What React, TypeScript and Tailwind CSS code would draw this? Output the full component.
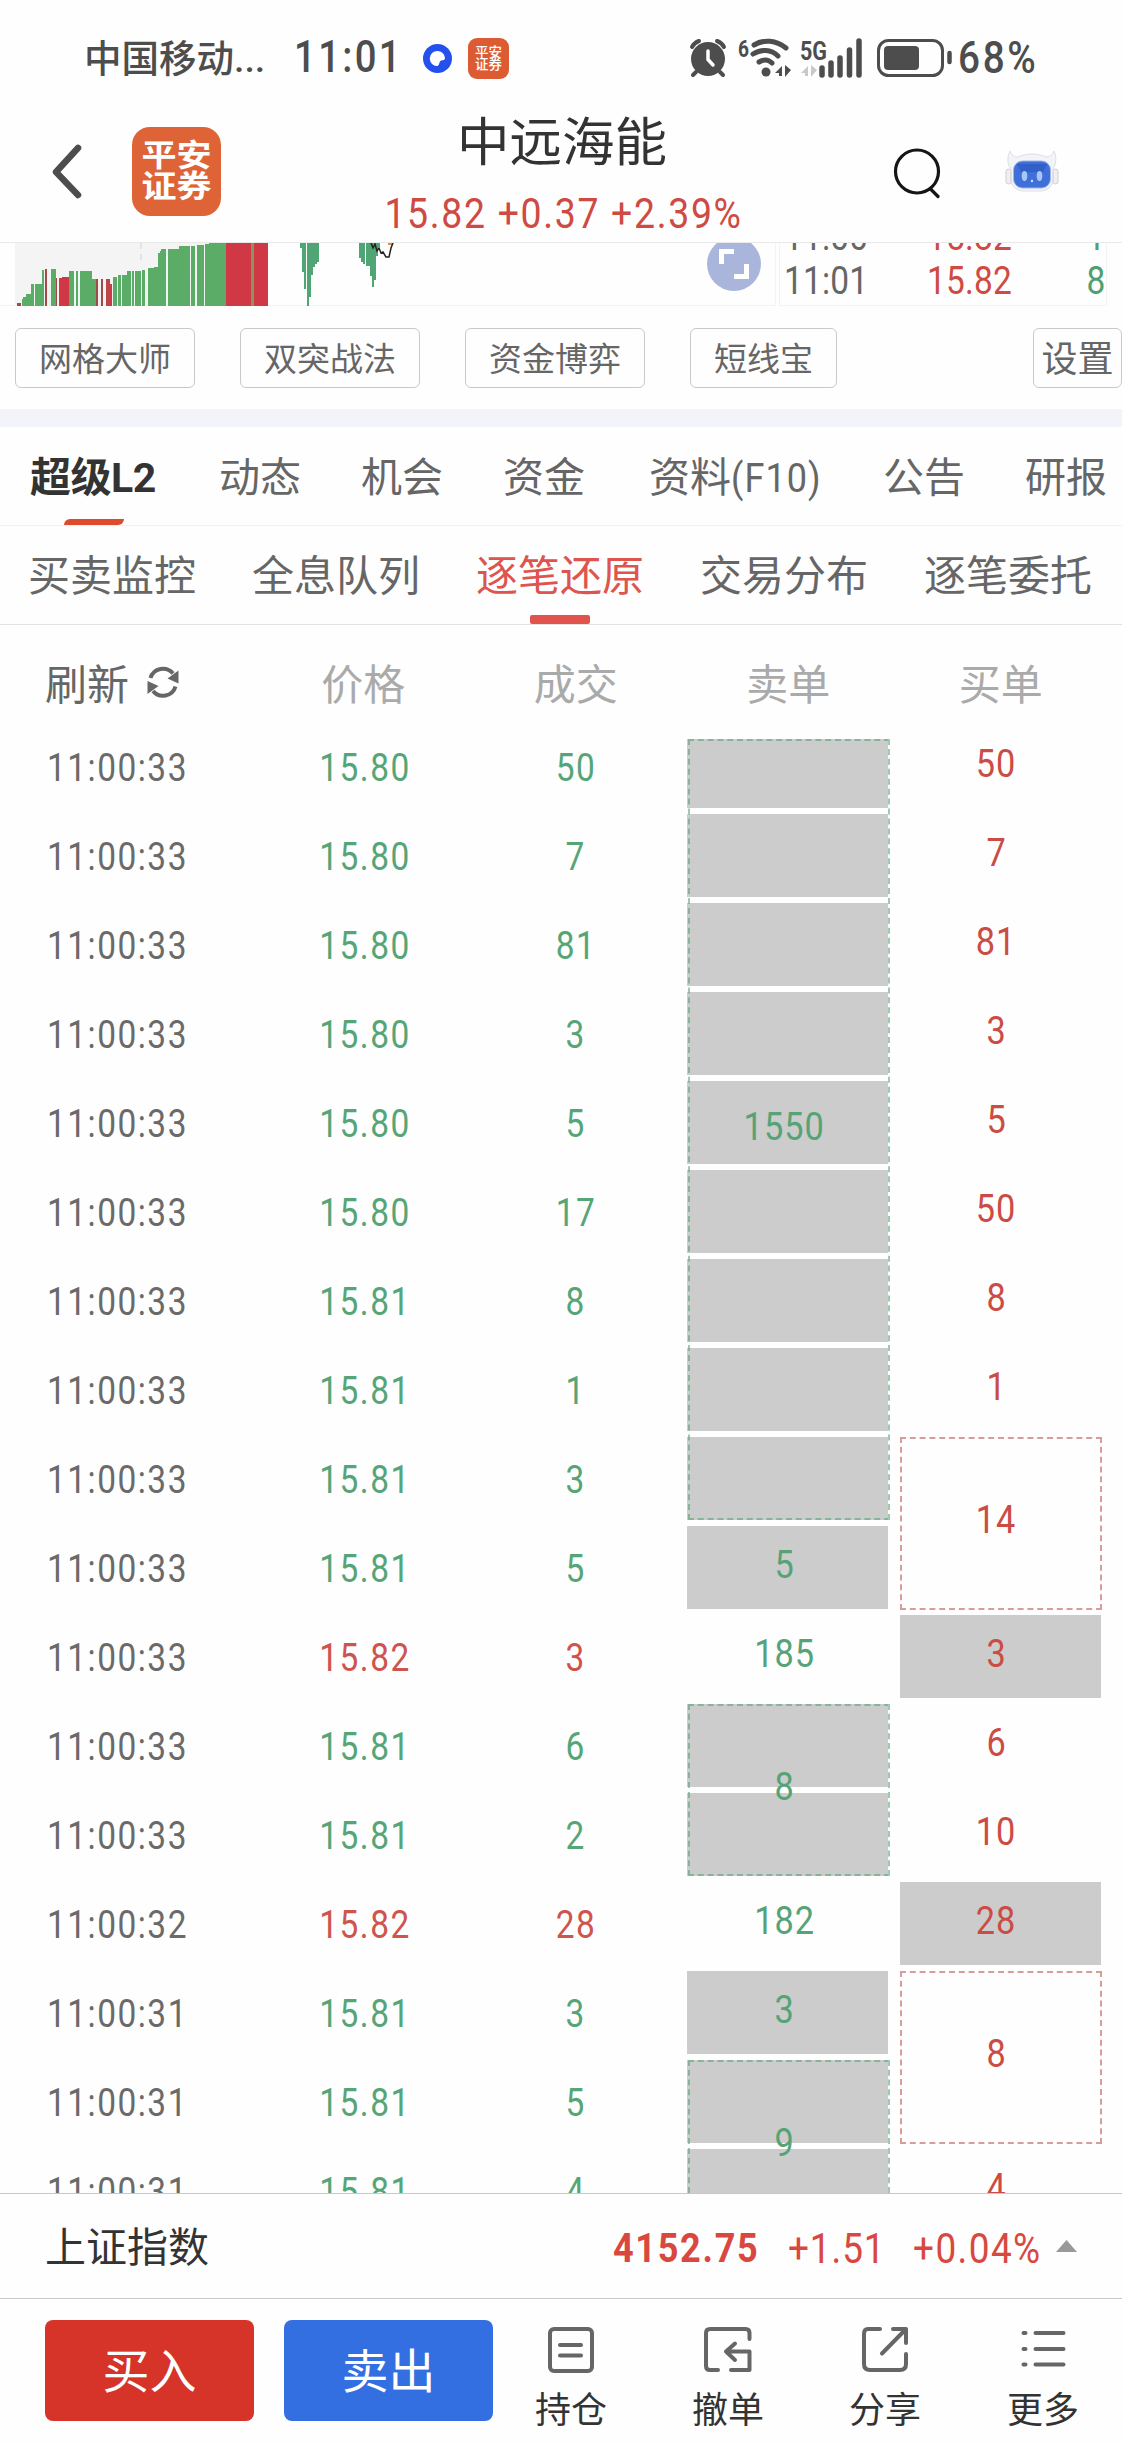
import type { ReactNode } from "react";
import clsx from "clsx";

type Order = { value: string; rows?: number; filled?: boolean; dashed?: boolean; cut?: boolean };

const trades = [
  { time: "11:00:33", price: "15.80", volume: "50" },
  { time: "11:00:33", price: "15.80", volume: "7" },
  { time: "11:00:33", price: "15.80", volume: "81" },
  { time: "11:00:33", price: "15.80", volume: "3" },
  { time: "11:00:33", price: "15.80", volume: "5" },
  { time: "11:00:33", price: "15.80", volume: "17" },
  { time: "11:00:33", price: "15.81", volume: "8" },
  { time: "11:00:33", price: "15.81", volume: "1" },
  { time: "11:00:33", price: "15.81", volume: "3" },
  { time: "11:00:33", price: "15.81", volume: "5" },
  { time: "11:00:33", price: "15.82", volume: "3", up: true },
  { time: "11:00:33", price: "15.81", volume: "6" },
  { time: "11:00:33", price: "15.81", volume: "2" },
  { time: "11:00:32", price: "15.82", volume: "28", up: true },
  { time: "11:00:31", price: "15.81", volume: "3" },
  { time: "11:00:31", price: "15.81", volume: "5" },
  { time: "11:00:31", price: "15.81", volume: "4" }
];

const sellOrders: Order[] = [
  { value: "1550", rows: 9, filled: true, dashed: true, cut: true },
  { value: "5", filled: true },
  { value: "185" },
  { value: "8", rows: 2, filled: true, dashed: true },
  { value: "182" },
  { value: "3", filled: true },
  { value: "9", rows: 2, filled: true, dashed: true }
];

const buyOrders: Order[] = [
  { value: "50" },
  { value: "7" },
  { value: "81" },
  { value: "3" },
  { value: "5" },
  { value: "50" },
  { value: "8" },
  { value: "1" },
  { value: "14", rows: 2, dashed: true },
  { value: "3", filled: true },
  { value: "6" },
  { value: "10" },
  { value: "28", filled: true },
  { value: "8", rows: 2, dashed: true },
  { value: "4" }
];

const GREEN = "#5bac66";
const RED = "#cf3844";

// x, width, top, color
const bars: [number, number, number, string][] = [
  [17, 4, 60, "#a5484a"],
  [21.5, 2, 56, GREEN], [23, 3, 54, GREEN], [26, 5.5, 51, GREEN], [31, 3, 41, GREEN],
  [34.8, 7, 41, GREEN], [42, 2, 27, GREEN], [45, 2, 26, "#a5484a"], [51, 5, 26, GREEN],
  [55.5, 1.8, 35, "#a5484a"], [59, 4, 35, RED], [62, 7, 34, RED], [69, 5.4, 28, GREEN],
  [75.5, 2, 28, GREEN], [80, 5.5, 28, GREEN], [86, 6, 28, GREEN], [92, 4, 36, GREEN],
  [95.6, 2, 36, "#a5484a"], [101, 2, 36, "#a5484a"], [106, 4, 36, "#b8474c"], [109.5, 2.4, 41, RED],
  [113, 3.6, 34, GREEN], [117.5, 3.5, 32, GREEN], [122, 5, 32, GREEN], [127, 4.4, 28, GREEN],
  [132, 2.2, 28, GREEN], [135, 6, 28, GREEN], [142, 3, 27, GREEN], [148, 6, 25, GREEN],
  [154, 4.2, 24, GREEN], [158, 2, 10, GREEN], [160, 1.5, 8, GREEN], [161, 5, 6, GREEN],
  [168, 11, 6, GREEN], [179, 11, 3, GREEN], [191, 4, 3, GREEN], [197, 7, 1.6, GREEN],
  [205, 5, 0.5, GREEN], [209, 17.2, 0, GREEN], [226, 13, 0, RED], [239.4, 12, 0, RED],
  [251.2, 3, 0, "#8a9558"], [254, 14, 0, RED]
];

// x, width, height
const drops = [
  [300, 2, 5], [302, 2, 29], [304, 2, 46], [307, 2, 63], [309, 2, 54], [311, 2, 32], [313, 2, 24],
  [315, 2, 21], [317, 2, 19], [359, 2, 15], [361, 2, 19], [363, 2, 21], [366, 4, 23], [370, 2, 33],
  [372, 2, 44], [374, 2, 37], [376, 2, 13], [378, 2, 4]
];

// Narrow figures used for every price and quantity
function Num({ children, className }: { children: ReactNode; className?: string }) {
  return <span className={clsx("inline-block scale-x-[.88] whitespace-pre", className)}>{children}</span>;
}

function StatusBar() {
  return (
    <div className="flex h-[116px] shrink-0 items-center pl-[84px] text-[#4d4d4d]">
      <div className="w-[210px] pt-0.5 text-[37.5px] font-medium leading-[44px]">中国移动...</div>
      <div className="w-[129px] text-[43.5px] font-medium">
        <Num className="origin-left tracking-[2.7px]">11:01</Num>
      </div>
      <svg className="h-[29px] w-[29px]" viewBox="0 0 29 29">
        <circle cx="14.5" cy="14.5" r="14.5" fill="#2450ee" />
        <path d="M14.5 7a7.5 7.5 0 0 1 7.5 7c0 3-4 1.5-5 3.5s-1 4.5-3 4.5A7.5 7.5 0 0 1 14.5 7z" fill="#fff" />
      </svg>
      <div className="ml-4 flex h-[41px] w-[41px] items-center justify-center rounded-[9px] bg-[#dd5b33]">
        <span className="text-center text-[13.5px] font-medium leading-[12.5px] text-white">平安<br />证券</span>
      </div>
      <svg className="ml-[179px] h-[44px] w-[266px]" viewBox="0 0 266 44" fill="none" stroke="#4d4d4d" strokeWidth="4" strokeLinecap="round">
        <circle cx="20" cy="23" r="17" fill="#4d4d4d" stroke="none" />
        <path d="M4 11a12 12 0 0 1 7-6M29 5a12 12 0 0 1 7 6M8 36l-3 3M32 36l3 3" />
        <path d="M20 15v8.500l5 5.500" stroke="#fff" strokeWidth="3.5" />
        <path d="M66 9c10-6 22-5 32 3M65 18c8-5 18-5 25 2M71 26c5-3 9-3 13 1" strokeWidth="5" />
        <circle cx="78" cy="36" r="4.5" fill="#4d4d4d" stroke="none" />
        <path d="M87 37l7-7v10h-3v-3zM97 29l6 5-6 7z" fill="#4d4d4d" stroke="none" />
        <path d="M113 37l7-7v10h-3v-3zM123 29l6 5-6 7z" fill="#c9c9c9" stroke="none" />
        <path d="M134 32v7M143 27v12M152 22v17M161.5 14v25M171 5v34" strokeWidth="5.5" />
        <text x="50" y="21" fontSize="24" fontWeight="700" fill="#4d4d4d" stroke="none" textLength="11" lengthAdjust="spacingAndGlyphs">6</text>
        <text x="112" y="24" fontSize="26" fontWeight="700" fill="#4d4d4d" stroke="none" textLength="27" lengthAdjust="spacingAndGlyphs">5G</text>
        <rect x="190.5" y="4.5" width="64" height="35" rx="10" strokeWidth="3" />
        <rect x="196" y="10" width="35" height="24" rx="4" fill="#4d4d4d" stroke="none" />
        <path d="M261.5 17v9" strokeWidth="4.5" />
      </svg>
      <div className="ml-1 text-[44px] font-medium">
        <Num className="origin-left tracking-[3px]">68%</Num>
      </div>
    </div>
  );
}

function Header() {
  return (
    <div className="flex h-[127px] shrink-0 items-start border-b border-[#e9e9e9]">
      <svg className="ml-[49px] mt-[26px] h-[58px] w-[36px]" viewBox="0 0 36 58" fill="none" stroke="#4d4d4d" strokeWidth="6.5" strokeLinecap="round" strokeLinejoin="round">
        <path d="M29 6L7 30l22 23" />
      </svg>
      <div className="ml-[47px] mt-[11px] flex h-[89px] w-[89px] items-center justify-center rounded-[18px] bg-[#de6437]">
        <span className="scale-y-[.87] text-center text-[35px] font-bold leading-[36px] text-white">平安<br />证券</span>
      </div>
      <div className="ml-[121px] w-[440px] text-center">
        <div className="pt-px text-[52.5px] leading-[52px] text-[#333]">中远海能</div>
        <div className="mt-[19px] text-[42.5px] leading-[52px] tracking-[1.9px] text-[#cf4a42]">
          <Num className="translate-x-[2px]">15.82 +0.37 +2.39%</Num>
        </div>
      </div>
      <svg className="ml-[110px] mt-[30px] h-[54px] w-[52px]" viewBox="0 0 52 54" fill="none" stroke="#151515" strokeWidth="3.2" strokeLinecap="round">
        <circle cx="25" cy="25.5" r="21.5" />
        <path d="M38.5 43l7.5 7.5" />
      </svg>
      <Robot />
    </div>
  );
}

function Robot() {
  return (
    <svg className="ml-[61px] mt-[33px] h-[44px] w-[54px]" viewBox="0 0 54 44">
      <path d="M5 2c2 5 5 6 8 6 8-4 20-4 28 0 3 0 6-1 8-6 3 7 2 13-1 18v10c0 8-6 12-14 12H20C12 42 6 38 6 30V20C2 15 2 8 5 2z" fill="#f3f4f8" stroke="#dcdfe6" />
      <rect x="1" y="20" width="5" height="15" rx="2.5" fill="#efeef3" stroke="#d4cdd2" />
      <rect x="48" y="20" width="5" height="15" rx="2.5" fill="#efeef3" stroke="#d4cdd2" />
      <rect x="8.5" y="12" width="37" height="27" rx="9" fill="#3f6fd8" stroke="#9eb4ea" />
      <path d="M12 15h30l-4 8H16z" fill="#2650b8" opacity=".5" />
      <ellipse cx="19.5" cy="27" rx="2.8" ry="5" fill="#a9c6f8" />
      <ellipse cx="34.5" cy="27" rx="2.8" ry="5" fill="#a9c6f8" />
      <circle cx="27" cy="32" r="1.2" fill="#cfe0ff" />
    </svg>
  );
}

function ChartStrip() {
  return (
    <div className="flex h-[63px] shrink-0 overflow-hidden">
      <div className="relative w-[776px] border-b border-r border-[#f3f3f3]">
        <svg className="h-[63px] w-[776px]" viewBox="0 0 776 63" shapeRendering="crispEdges">
          <rect x="15" width="253" height="63" fill="#f4f4f4" />
          <path d="M141 0v22" stroke="#e3e3e3" strokeWidth="2" strokeDasharray="6 5" />
          <rect x="42" y="40" width="184" height="23" fill="#eef4ef" />
          {bars.map(([x, w, top, color]) => (
            <rect key={x} x={x} y={top} width={w} height={63 - top} fill={color} />
          ))}
          {drops.map(([x, w, h]) => (
            <rect key={x} x={x} width={w} height={h} fill="#4fa674" />
          ))}
          <path d="M388 0h5v1.5h-5z" fill="#e08a4a" />
          <path d="M371 0l2 5 2-4 2 7 2-3 2 5 2-1 3 5 3 0 2-9 2-5" fill="none" stroke="#222" strokeWidth="1.5" shapeRendering="auto" />
        </svg>
        <svg className="absolute left-[707px] top-[-6px] h-[54px] w-[54px]" viewBox="0 0 54 54">
          <circle cx="27" cy="27" r="27" fill="#a9b5da" />
          <path d="M14.5 27V14.5H27M27 39.5h12.5V27" fill="none" stroke="#fff" strokeWidth="5" />
        </svg>
      </div>
      <div className="ml-[3px] flex w-[328px] flex-col justify-end border-x border-b border-[#f3f3f3] pb-[2px] text-[38px] leading-[44px] tracking-[.2px]">
        {[["11:00", "1"], ["11:01", "8"]].map(([time, count]) => (
          <div key={time} className="flex pl-1">
            <Num className="w-[143px] origin-left text-[#666]">{time}</Num>
            <Num className="origin-left text-[#cf4a42]">15.82</Num>
            <Num className="ml-auto origin-right text-[#4fa070]">{count}</Num>
          </div>
        ))}
      </div>
    </div>
  );
}

function Chip({ children, className }: { children: ReactNode; className: string }) {
  return (
    <div className={clsx("flex h-[60px] items-center justify-center whitespace-nowrap rounded-[6px] border border-[#c9c9c9] pt-[5px] text-[#666]", className)}>
      {children}
    </div>
  );
}

function Tabs() {
  return (
    <div className="relative flex h-[99px] shrink-0 items-center gap-[60px] whitespace-nowrap border-b border-[#f1f1f1] pl-[30px] pt-[6px] text-[41px] text-[#666]">
      <div className="w-[129px] font-bold tracking-[-0.5px] text-[#333]">超级L2</div>
      <div>动态</div>
      <div>机会</div>
      <div>资金</div>
      <div className="w-[178px] pl-1">
        资料<Num className="origin-left tracking-[1.2px]">(F10)</Num>
      </div>
      <div>公告</div>
      <div>研报</div>
      <div className="absolute bottom-0 left-[64px] h-[6px] w-[60px] rounded-br-[6px] rounded-tl-[6px] bg-[#dd4a2c]" />
    </div>
  );
}

function SubTabs() {
  return (
    <div className="flex h-[99px] shrink-0 gap-14 border-b border-[#e2e2e2] pl-[28px] text-[42px] leading-[101px] text-[#666]">
      {["买卖监控", "全息队列", "逐笔还原", "交易分布", "逐笔委托"].map((name) => (
        <div key={name} className={clsx("relative w-[168px] whitespace-nowrap", name === "逐笔还原" && "text-[#dc554e]")}>
          {name}
          {name === "逐笔还原" && <div className="absolute bottom-0 left-[54px] h-[9px] w-[60px] rounded-[2px] bg-[#e0544d]" />}
        </div>
      ))}
    </div>
  );
}

function OrderColumn({ orders, side }: { orders: Order[]; side: "sell" | "buy" }) {
  return (
    <div className="flex w-[201px] flex-col gap-1.5">
      {orders.map((order, i) => {
        const rows = order.rows ?? 1;
        return (
          <div
            key={i}
            className={clsx("relative flex shrink-0 flex-col justify-end gap-1.5", order.cut && "mt-[14px]")}
            style={{ height: rows * 89 - 6 - (order.cut ? 14 : 0) }}
          >
            {Array.from({ length: rows }, (_, row) => (
              <div key={row} className={clsx(order.cut && row === 0 ? "h-[69px]" : "h-[83px]", order.filled && "bg-[#ccc]")} />
            ))}
            {order.dashed && (
              <div className={clsx("absolute border-2 border-dashed", side === "sell" ? "inset-y-0 -right-0.5 left-px border-[#4fa074]/55" : "-bottom-px -right-px left-0 top-0 border-[#b4504a]/55")} />
            )}
            <div className={clsx("absolute inset-0 flex items-center justify-center text-[39px] tracking-[1.2px]", rows === 2 ? "-translate-y-[3px]" : "-translate-y-[2px]", side === "sell" ? "-translate-x-[3px] text-[#55a376]" : "-translate-x-1 text-[#cb4c44]")}>
              <Num>{order.value}</Num>
            </div>
          </div>
        );
      })}
    </div>
  );
}

function TradeTable() {
  return (
    <>
      <div className="flex h-[114px] shrink-0 items-center pt-[6px] text-[42px] text-[#aaa]">
        <div className="flex w-[257px] items-center pl-[45px] text-[#666]">
          刷新
          <svg className="mb-1.5 ml-[18px] h-8 w-8" viewBox="0 0 32 32" fill="none" stroke="#666" strokeWidth="4">
            <path d="M3.5 12A13 13 0 0 1 26 7.500M28.500 20.500A13 13 0 0 1 6 25" />
            <path d="M31.5 4.500v13L20.500 12.500zM.5 28V15l11 5z" fill="#666" stroke="none" />
          </svg>
        </div>
        {["价格", "成交", "卖单", "买单"].map((name) => (
          <div key={name} className="w-[212.5px] text-center">{name}</div>
        ))}
      </div>
      <div className="flex h-[1454px] shrink-0 overflow-hidden">
        <div className="-mt-[14px] w-[687px] text-[38px] tracking-[1.7px]">
          {trades.map((trade, i) => (
            <div key={i} className="flex h-[89px] items-center pb-[2px]">
              <div className="w-[257px] pl-[47px] text-[#6a6a6a]"><Num className="origin-left">{trade.time}</Num></div>
              <div className={clsx("w-[216px] text-center", trade.up ? "text-[#cf544d]" : "text-[#56a577]")}><Num>{trade.price}</Num></div>
              <div className={clsx("w-[206px] text-center", trade.up ? "text-[#cf544d]" : "text-[#56a577]")}><Num>{trade.volume}</Num></div>
            </div>
          ))}
        </div>
        <div className="-mt-[14px] flex gap-3">
          <OrderColumn orders={sellOrders} side="sell" />
          <OrderColumn orders={buyOrders} side="buy" />
        </div>
      </div>
    </>
  );
}

function IndexBar() {
  return (
    <div className="flex h-[105px] shrink-0 items-center border-t border-[#c8c8c8] pl-[45px] pt-[5px] text-[#d9483f]">
      <div className="w-[568px] text-[41px] text-[#333]">上证指数</div>
      <div className="w-[175px] text-[41px] font-bold tracking-[1.9px]"><Num className="origin-left">4152.75</Num></div>
      <div className="w-[125px] text-[42px] tracking-[1px]"><Num className="origin-left">+1.51</Num></div>
      <div className="w-[143px] text-[42px] tracking-[1.6px]"><Num className="origin-left">+0.04%</Num></div>
      <svg className="mb-1.5 h-[12px] w-[21px]" viewBox="0 0 21 12">
        <path d="M10.5 0L21 12H0z" fill="#999" />
      </svg>
    </div>
  );
}

function Action({ label, className, children }: { label: string; className: string; children: ReactNode }) {
  return (
    <div className={clsx("flex w-[72px] flex-col items-center", className)}>
      <svg className="mt-[5px] h-[50px] w-[50px]" viewBox="0 0 50 50" fill="none" stroke="#666" strokeWidth="4" strokeLinecap="round" strokeLinejoin="round">
        {children}
      </svg>
      <span className="mt-[18px] text-[36px] leading-[36px] text-[#333]">{label}</span>
    </div>
  );
}

function BottomBar() {
  return (
    <div className="flex h-[144px] shrink-0 items-start border-t border-[#c8c8c8] pl-[45px] pt-[21px]">
      <button className="h-[101px] w-[209px] rounded-[8px] bg-[#d63329] pt-1 text-[47px] text-white">买入</button>
      <button className="ml-[30px] h-[101px] w-[209px] rounded-[8px] bg-[#346fe1] pt-1 text-[47px] text-white">卖出</button>
      <Action label="持仓" className="ml-[42px]">
        <rect x="4" y="4" width="42" height="42" rx="4" />
        <path d="M14 20h21M14 30.5h21" />
      </Action>
      <Action label="撤单" className="ml-[85px]">
        <path d="M46.5 14V8q0-4-4-4H7Q3 4 3 8v33q0 4 4 4h8M28 45h18.500V26.500H23M32 18.500l-9 8 9 8.500" />
      </Action>
      <Action label="分享" className="ml-[85px]">
        <path d="M20 4H8Q4 4 4 9v30q0 6 6 6h30q6 0 6-6V29M33 4h13v14M46 4L22 28.500" />
      </Action>
      <Action label="更多" className="ml-[86px]">
        <path d="M5.5 8h2M17.500 8h28M5.500 24h2M17.500 24h28M5.500 39.500h2M17.500 39.500h28" />
      </Action>
    </div>
  );
}

export default function App() {
  return (
    <div className="flex h-[2442px] w-[1122px] flex-col overflow-hidden bg-[#fefefe] font-[Roboto,'Noto_Sans_CJK_SC',sans-serif]">
      <StatusBar />
      <Header />
      <ChartStrip />
      <div className="flex h-[103px] shrink-0 items-center gap-[45px] pl-[15px] text-[33px]">
        <Chip className="w-[180px]">网格大师</Chip>
        <Chip className="w-[180px]">双突战法</Chip>
        <Chip className="w-[180px]">资金博弈</Chip>
        <Chip className="w-[147px]">短线宝</Chip>
        <Chip className="ml-auto w-[89px] text-[36px]">设置</Chip>
      </div>
      <div className="h-[18px] shrink-0 bg-[#f3f4f9]" />
      <Tabs />
      <SubTabs />
      <TradeTable />
      <IndexBar />
      <BottomBar />
    </div>
  );
}
